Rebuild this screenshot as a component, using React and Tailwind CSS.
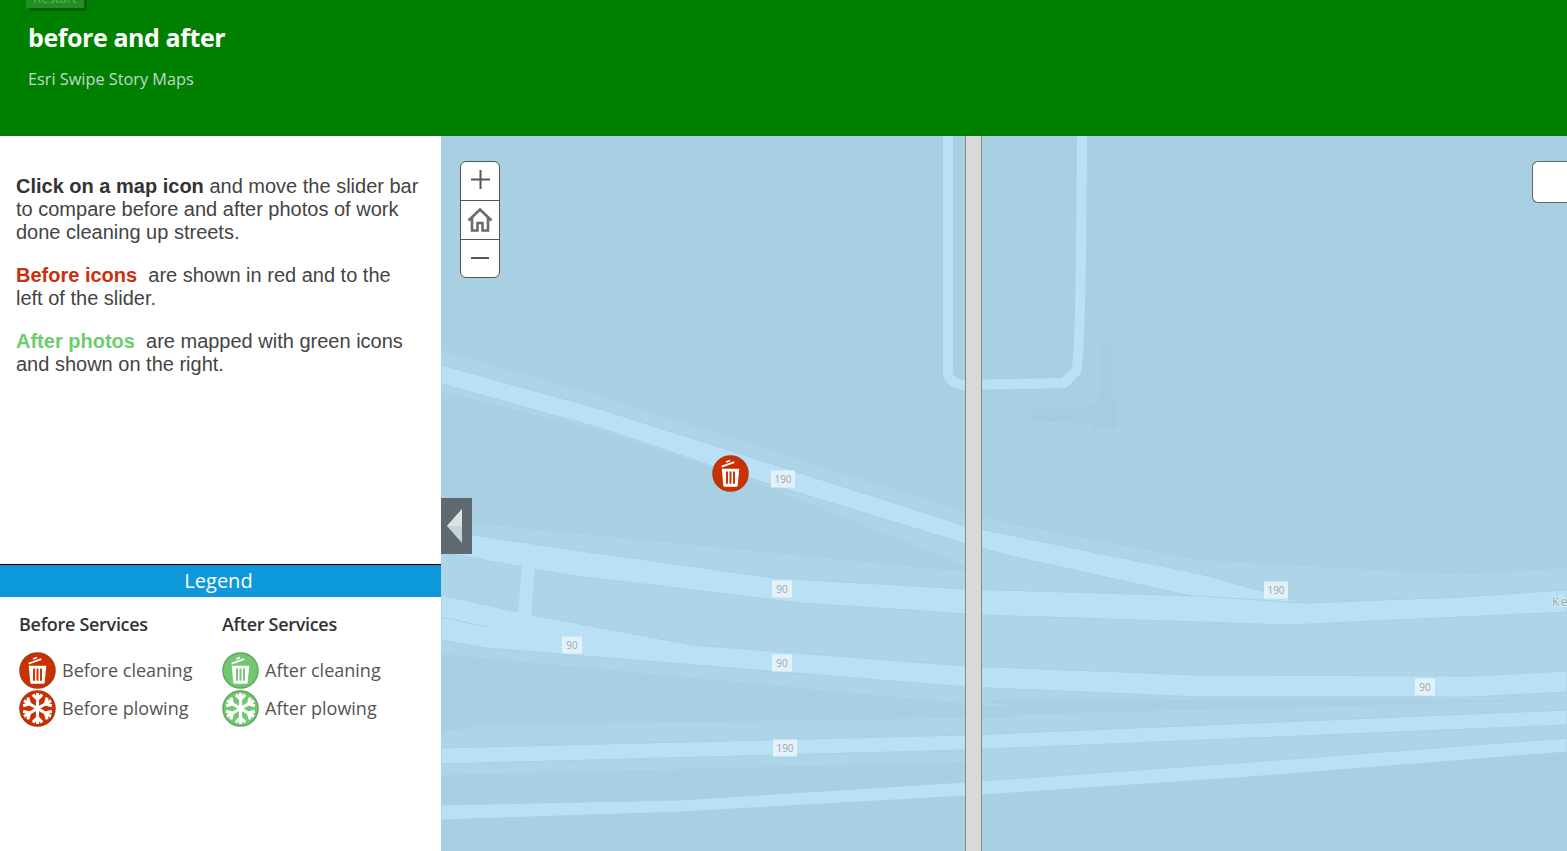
import React from "react";

const OPEN = "font-['Open_Sans',sans-serif]";

const labels = [
  { x: 783, y: 479, w: 24, h: 17, t: "190" },
  { x: 782, y: 589, w: 20, h: 17, t: "90" },
  { x: 572, y: 645, w: 20, h: 17, t: "90" },
  { x: 782, y: 663, w: 20, h: 17, t: "90" },
  { x: 785, y: 748, w: 24, h: 17, t: "190" },
  { x: 1276, y: 590, w: 24, h: 17, t: "190" },
  { x: 1425, y: 687, w: 20, h: 17, t: "90" },
];

const Trash = () => (
  <g fill="#fff">
    <path d="M9.6 11 L22.6 6.4 L23.2 8.2 L10.2 12.8 Z" />
    <path d="M14.6 7.9 L18.8 6.4 L18.4 5 L14.2 6.5 Z" />
    <path
      fillRule="evenodd"
      d="M10 14 H28 L26.4 31.2 Q26.3 32.6 24.9 32.6 H13.1 Q11.7 32.6 11.6 31.2 Z M14.4 17 V29.6 H16.4 V17 Z M18 17 V29.6 H20 V17 Z M21.6 17 V29.6 H23.6 V17 Z"
    />
  </g>
);

const Flake = () => (
  <g stroke="#fff" strokeWidth="3.2" fill="none">
    {[0, 60, 120, 180, 240, 300].map((a) => (
      <path
        key={a}
        d="M19 19 V3 M14.2 4.8 L19 9.6 L23.8 4.8"
        transform={`rotate(${a} 19 19)`}
      />
    ))}
  </g>
);

const Marker = ({ kind, color, edge }) => (
  <svg width="37" height="37" viewBox="0 0 38 38" className="shrink-0 block">
    <circle cx="19" cy="19" r="18" fill={color} stroke={edge} strokeWidth="1.5" />
    {kind === "trash" ? <Trash /> : <Flake />}
  </svg>
);

const LegendItem = ({ kind, color, edge, label }) => (
  <div className="flex items-center h-[38px] gap-[6px]">
    <Marker kind={kind} color={color} edge={edge} />
    <span className="text-[18px] text-[#555555] leading-none">{label}</span>
  </div>
);

const MapArt = () => (
  <svg
    viewBox="441 136 1126 715"
    preserveAspectRatio="none"
    className="w-full h-full block"
  >
    <rect x="441" y="136" width="1126" height="715" fill="#a9d0e2" />

    {/* lighter land bands */}
    <path
      d="M441 350 L600 396 L965 512 L1010 524 L1200 560 L1460 575 L1567 568 V740 L1250 764 L982 782 L966 720 L486 725 L441 732 V775 L966 762 L982 760 L1567 735 V700 H982 L1015 708 L966 704 L441 654 V520 L985 574 L966 566 L750 480 L600 430 L441 392 Z"
      fill="#aed4e8"
    />
    <path d="M441 732 L486 725 L966 716 L1567 700 V735 L982 760 L441 775 Z" fill="#aed4e8" />
    <path d="M982 700 H1567 V568 L1460 575 L1200 560 L982 525 Z" fill="#aed4e8" />
    <path d="M441 654 L966 704 L1015 708 L1014 718 L966 718 L486 725 L441 732 Z" fill="#a9d0e2" />
    <path d="M441 520 L750 560 L985 572 L982 600 L441 600 Z" fill="#aed4e8" />
    <path d="M441 560 L523 562 L519 612 L441 596 Z" fill="#aed4e8" />
    <path d="M535 564 L780 600 L780 640 L530 615 Z" fill="#aed4e8" />

    {/* service road */}
    <path
      d="M948 136 V372 Q948 382 962 385 L1064 383 L1076 371 Q1081 360 1082 136"
      fill="none"
      stroke="#b9e0f5"
      strokeWidth="10"
    />
    <path
      d="M1098 343 H1113 V398 L1118 400 V429 H1090 V424 L1032 423 V408 H1086 L1098 398 Z"
      fill="#a6cce0"
      stroke="#add3e6"
    />

    {/* highway roads */}
    <g fill="#b9e0f5" stroke="#a8cfe3" strokeWidth="1">
      <path d="M441 365 L600 409 L966 526 L1010 535 L1200 574 L1305 603 L1200 598 L1010 556 L966 544 L730 472 L600 428 L441 384 Z" />
      <path d="M441 530 L560 548 L775 578 L966 589 L1200 596 L1304 603 L1460 597 L1567 590 V612 L1290 625 L982 615 L800 603 L560 574 L441 552 Z" />
      <path d="M441 595 L519 612 L530 615 L559 620 L693 645 L966 666 L1200 675 L1470 676 L1567 671 V692 L1470 697 L1200 697 L966 687 L485 648 L441 640 Z" />
      <path d="M441 748 L966 735 L1567 710 V725 L966 750 L441 764 Z" />
      <path d="M441 805 L680 800 L966 782 L1250 762 L1567 738 V752 L1250 777 L966 796 L680 812 L441 820 Z" />
    </g>
    {/* connector between the two 90 ramps */}
    <path d="M523 550 L536 552 L531 618 L518 615 Z" fill="#b9e0f5" />
    <path d="M441 617 L486 627" fill="none" stroke="#a8cfe3" />

    {/* route shields */}
    {labels.map((l) => (
      <g key={l.x + "-" + l.y}>
        <rect
          x={l.x - l.w / 2}
          y={l.y - l.h / 2}
          width={l.w}
          height={l.h}
          fill="#e3f1f9"
        />
        <text
          x={l.x}
          y={l.y + 4}
          textAnchor="middle"
          fontSize="10"
          fontFamily="Open Sans, sans-serif"
          fill="#9aa8b0"
        >
          {l.t}
        </text>
      </g>
    ))}
    <text
      x="1552"
      y="606"
      fontSize="12"
      letterSpacing="1.5"
      fontFamily="Open Sans, sans-serif"
      fill="#9aa8b0"
      stroke="#d6ebf7"
      strokeWidth="2"
      paintOrder="stroke"
    >
      Ke
    </text>
  </svg>
);

const ZoomControl = () => (
  <div className="absolute left-[19px] top-[25px] w-10 h-[117px] bg-white border border-[#555555] rounded-[6px] flex flex-col items-center">
    <button className="h-[39px] w-[38px] pb-[3px] flex items-center justify-center border-b border-[#555555]">
      <svg width="19" height="19" viewBox="0 0 19 19">
        <path d="M9.5 0 V19 M0 9.5 H19" stroke="#555555" strokeWidth="2" />
      </svg>
    </button>
    <button className="h-[39px] w-[38px] flex items-center justify-center border-b border-[#555555]">
      <svg width="26" height="24" viewBox="0 0 26 24">
        <path
          d="M1.5 12.5 L13 1.5 L24.5 12.5 M5 9.5 V22.5 H10.5 V15 H15.5 V22.5 H21 V9.5"
          fill="none"
          stroke="#6b6b6b"
          strokeWidth="2.6"
        />
      </svg>
    </button>
    <button className="flex-1 w-[38px] pb-[2px] flex items-center justify-center">
      <svg width="18" height="4" viewBox="0 0 18 4">
        <path d="M0 2 H18" stroke="#555555" strokeWidth="2" />
      </svg>
    </button>
  </div>
);

const App = () => {
  return (
    <div className={`h-[851px] w-full overflow-hidden flex flex-col bg-white ${OPEN}`}>
      <header className="relative h-[136px] shrink-0 bg-[#008000] pl-[28px] pt-[20px]">
        <div className="absolute left-[26px] -top-[10px] w-[58px] h-[18px] bg-[#218f21] shadow-[3px_3px_0_#0a600a] text-center text-[13px] leading-[16px] text-[#5fb05f]">
          Restart
        </div>
        <h1 className="text-[25px] leading-[34px] font-bold tracking-[-0.42px] text-white">
          before and after
        </h1>
        <p className="mt-[14px] text-[16.3px] leading-[22px] text-[#c3d9cc]">
          Esri Swipe Story Maps
        </p>
      </header>

      <div className="flex flex-1 min-h-0">
        <aside className="w-[441px] shrink-0 flex flex-col bg-white">
          <div className="h-[428px] shrink-0 pl-4 pr-5 pt-[39px] font-['Liberation_Sans',sans-serif] text-[20px] leading-[23px] text-[#444444]">
            <p>
              <b className="text-[#333333]">Click on a map icon</b> and move the slider bar to
              compare before and after photos of work done cleaning up streets.
            </p>
            <p className="mt-5">
              <b className="text-[#c9300d]">Before icons</b>&nbsp; are shown in red and to the
              left of the slider.
            </p>
            <p className="mt-5">
              <b className="text-[#6fcb6f]">After photos</b>&nbsp; are mapped with green icons
              and shown on the right.
            </p>
          </div>

          <div className="border-t border-black bg-[#0e98dc] h-[33px] pr-1 text-center text-[20px] leading-[32px] text-white">
            Legend
          </div>

          <div className="flex pl-[19px] pt-[15px]">
            <div className="w-[203px]">
              <h2 className="text-[18px] leading-[25px] font-semibold text-[#333333] tracking-[-0.3px]">
                Before Services
              </h2>
              <div className="mt-[14px] flex flex-col">
                <LegendItem kind="trash" color="#c93100" edge="#a83a17" label="Before cleaning" />
                <LegendItem kind="flake" color="#c93100" edge="#a83a17" label="Before plowing" />
              </div>
            </div>
            <div>
              <h2 className="text-[18px] leading-[25px] font-semibold text-[#333333] tracking-[-0.3px]">
                After Services
              </h2>
              <div className="mt-[14px] flex flex-col">
                <LegendItem kind="trash" color="#72c772" edge="#5fa65f" label="After cleaning" />
                <LegendItem kind="flake" color="#72c772" edge="#5fa65f" label="After plowing" />
              </div>
            </div>
          </div>
        </aside>

        <main className="relative flex-1 min-w-0 overflow-hidden">
          <MapArt />
          <ZoomControl />

          <div className="absolute right-0 top-[25px] w-[35px] h-[42px] bg-white border border-r-0 border-[#666666] rounded-l-[6px]" />

          <button className="absolute left-0 top-[362px] w-[31px] h-[56px] bg-[#5f6a70] flex items-center pl-[6px]">
            <svg width="16" height="34" viewBox="0 0 16 34">
              <path d="M15 0 V34 L0 17 Z" fill="#c9d4d4" />
              <path d="M15 0 L0 17 H15 Z" fill="#dbe3e3" />
            </svg>
          </button>

          <div className="absolute left-[271px] top-[319px]">
            <Marker kind="trash" color="#c93100" edge="#b4360f" />
          </div>

          <div className="absolute left-[524px] top-0 bottom-0 w-[17px] bg-[#d9d9d9] border-x border-[#8a8a8a]" />
        </main>
      </div>
    </div>
  );
};

export default App;
